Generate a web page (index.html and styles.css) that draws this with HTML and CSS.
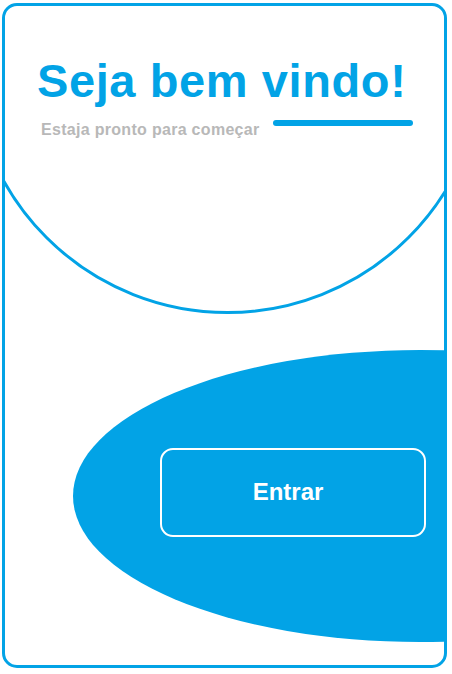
FILE: index.html
```html
<!DOCTYPE html>
<html lang="pt">
<head>
<meta charset="utf-8">
<title>Seja bem vindo</title>
<link rel="stylesheet" href="styles.css">
</head>
<body>
<main class="card">
  <div class="arc" aria-hidden="true"></div>
  <div class="blob" aria-hidden="true"></div>
  <header class="header">
    <h1 class="title">Seja bem vindo!</h1>
    <div class="sub-row">
      <p class="subtitle">Estaja pronto para começar</p>
      <span class="bar"></span>
    </div>
  </header>
  <button class="enter" type="button">Entrar</button>
</main>
</body>
</html>
```
FILE: styles.css
```css
* { box-sizing: border-box; }

html, body {
  margin: 0;
  padding: 0;
  background: #ffffff;
}

body {
  padding: 3px 5px 6px 2px;
  font-family: "Liberation Sans", Arial, sans-serif;
}

.card {
  position: relative;
  width: 445px;
  height: 665px;
  border: 3px solid #02a3e6;
  border-radius: 15px;
  overflow: hidden;
  background: #ffffff;
  display: flex;
  flex-direction: column;
}

.arc {
  position: absolute;
  left: -35.5px;
  top: -207.5px;
  width: 515px;
  height: 515px;
  border: 3px solid #02a3e6;
  border-radius: 50%;
}

.blob {
  position: absolute;
  left: 68px;
  top: 344px;
  width: 694px;
  height: 292px;
  border-radius: 50%;
  background: #02a3e6;
}

.header {
  position: relative;
  padding: 51px 0 0 32px;
}

.title {
  margin: 0;
  font-size: 47px;
  line-height: 47px;
  font-weight: 700;
  color: #02a3e6;
  letter-spacing: 0.6px;
}

.sub-row {
  display: flex;
  align-items: flex-start;
  margin-top: 16px;
}

.subtitle {
  margin: 0 0 0 4px;
  padding-top: 1.5px;
  font-size: 16px;
  line-height: 16px;
  font-weight: 700;
  color: #b8b8b8;
  letter-spacing: 0.3px;
}

.bar {
  width: 140px;
  height: 6px;
  margin-left: 13px;
  border-radius: 3px;
  background: #02a3e6;
}

.enter {
  position: relative;
  align-self: flex-end;
  margin: 310px 18px 0 0;
  width: 266px;
  height: 89px;
  border: 2px solid #ffffff;
  border-radius: 13px;
  background: transparent;
  color: #ffffff;
  font-family: "Liberation Sans", Arial, sans-serif;
  font-size: 24px;
  font-weight: 700;
  padding: 0 10px 0 0;
  cursor: pointer;
}
```
